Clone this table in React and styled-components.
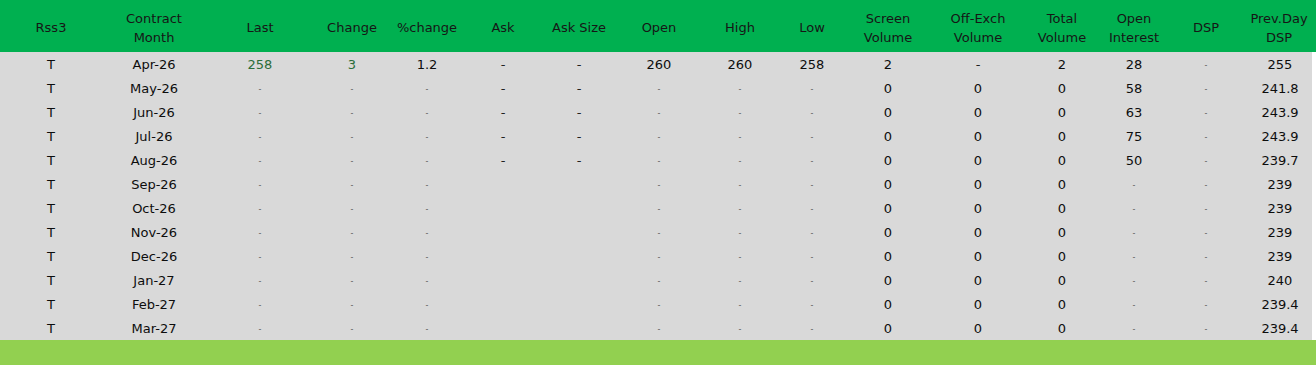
import React from 'react';
import styled, { createGlobalStyle } from 'styled-components';

const GlobalStyle = createGlobalStyle`
    html, body {
        margin: 0;
        padding: 0;
        background: #ffffff;
    }
    body {
        font-family: "DejaVu Sans", Verdana, sans-serif;
    }
`;

const COLUMNS = '102px 104px 108px 76px 74px 78px 74px 86px 76px 68px 84px 96px 72px 72px 72px 1fr';

const Board = styled.div`
    width: 1316px;
    height: 365px;
    display: flex;
    flex-direction: column;
    font-size: 13px;
    color: #0d0d0d;
`;

const HeaderRow = styled.div`
    display: grid;
    grid-template-columns: ${COLUMNS};
    height: 52px;
    background-color: #00b050;
    color: #161616;
`;

const HeaderCell = styled.div`
    display: flex;
    align-items: center;
    justify-content: center;
    text-align: center;
    line-height: 19px;
    padding-top: 3px;
`;

const Body = styled.div`
    width: 1312px;
    background-color: #d9d9d9;
`;

const Row = styled.div`
    display: grid;
    grid-template-columns: ${COLUMNS};
    height: 24px;
`;

const Cell = styled.div`
    display: flex;
    align-items: center;
    justify-content: center;
    padding-left: ${props => props.shift || 0}px;
    color: ${props => (props.up ? '#2b6d3a' : '#0d0d0d')};
`;

const Blank = styled.span`
    font-size: 8px;
    color: #5a5a5a;
    padding-top: 3px;
`;

const Dash = styled.span`
    color: #222222;
`;

const Footer = styled.div`
    height: 25px;
    background-color: #92d050;
`;

const headers = [
    'Rss3', ['Contract', 'Month'], 'Last', 'Change', '%change', 'Ask', 'Ask Size',
    'Open', 'High', 'Low', ['Screen', 'Volume'], ['Off-Exch', 'Volume'],
    ['Total', 'Volume'], ['Open', 'Interest'], 'DSP', ['Prev.Day', 'DSP'],
];

// '.' = small grey blank, '-' = regular dash
const rows = [
    ['T', 'Apr-26', '258', '3', '1.2', '-', '-', '260', '260', '258', '2', '-', '2', '28', '.', '255'],
    ['T', 'May-26', '.', '.', '.', '-', '-', '.', '.', '.', '0', '0', '0', '58', '.', '241.8'],
    ['T', 'Jun-26', '.', '.', '.', '-', '-', '.', '.', '.', '0', '0', '0', '63', '.', '243.9'],
    ['T', 'Jul-26', '.', '.', '.', '-', '-', '.', '.', '.', '0', '0', '0', '75', '.', '243.9'],
    ['T', 'Aug-26', '.', '.', '.', '-', '-', '.', '.', '.', '0', '0', '0', '50', '.', '239.7'],
    ['T', 'Sep-26', '.', '.', '.', '', '', '.', '.', '.', '0', '0', '0', '.', '.', '239'],
    ['T', 'Oct-26', '.', '.', '.', '', '', '.', '.', '.', '0', '0', '0', '.', '.', '239'],
    ['T', 'Nov-26', '.', '.', '.', '', '', '.', '.', '.', '0', '0', '0', '.', '.', '239'],
    ['T', 'Dec-26', '.', '.', '.', '', '', '.', '.', '.', '0', '0', '0', '.', '.', '239'],
    ['T', 'Jan-27', '.', '.', '.', '', '', '.', '.', '.', '0', '0', '0', '.', '.', '240'],
    ['T', 'Feb-27', '.', '.', '.', '', '', '.', '.', '.', '0', '0', '0', '.', '.', '239.4'],
    ['T', 'Mar-27', '.', '.', '.', '', '', '.', '.', '.', '0', '0', '0', '.', '.', '239.4'],
];

const renderValue = (value) => {
    if (value === '.') return <Blank>-</Blank>;
    if (value === '-') return <Dash>-</Dash>;
    return value;
};

const App = () => {
    return (
        <Board>
            <GlobalStyle />
            <HeaderRow>
                {headers.map((h, i) => (
                    <HeaderCell key={i}>
                        {Array.isArray(h) ? <span>{h[0]}<br />{h[1]}</span> : h}
                    </HeaderCell>
                ))}
            </HeaderRow>
            <Body>
                {rows.map((row, r) => (
                    <Row key={r}>
                        {row.map((value, c) => (
                            <Cell
                                key={c}
                                up={r === 0 && (c === 2 || c === 3)}
                                shift={c === 15 ? 6 : 0}
                            >
                                {renderValue(value)}
                            </Cell>
                        ))}
                    </Row>
                ))}
            </Body>
            <Footer />
        </Board>
    );
};

export default App;
